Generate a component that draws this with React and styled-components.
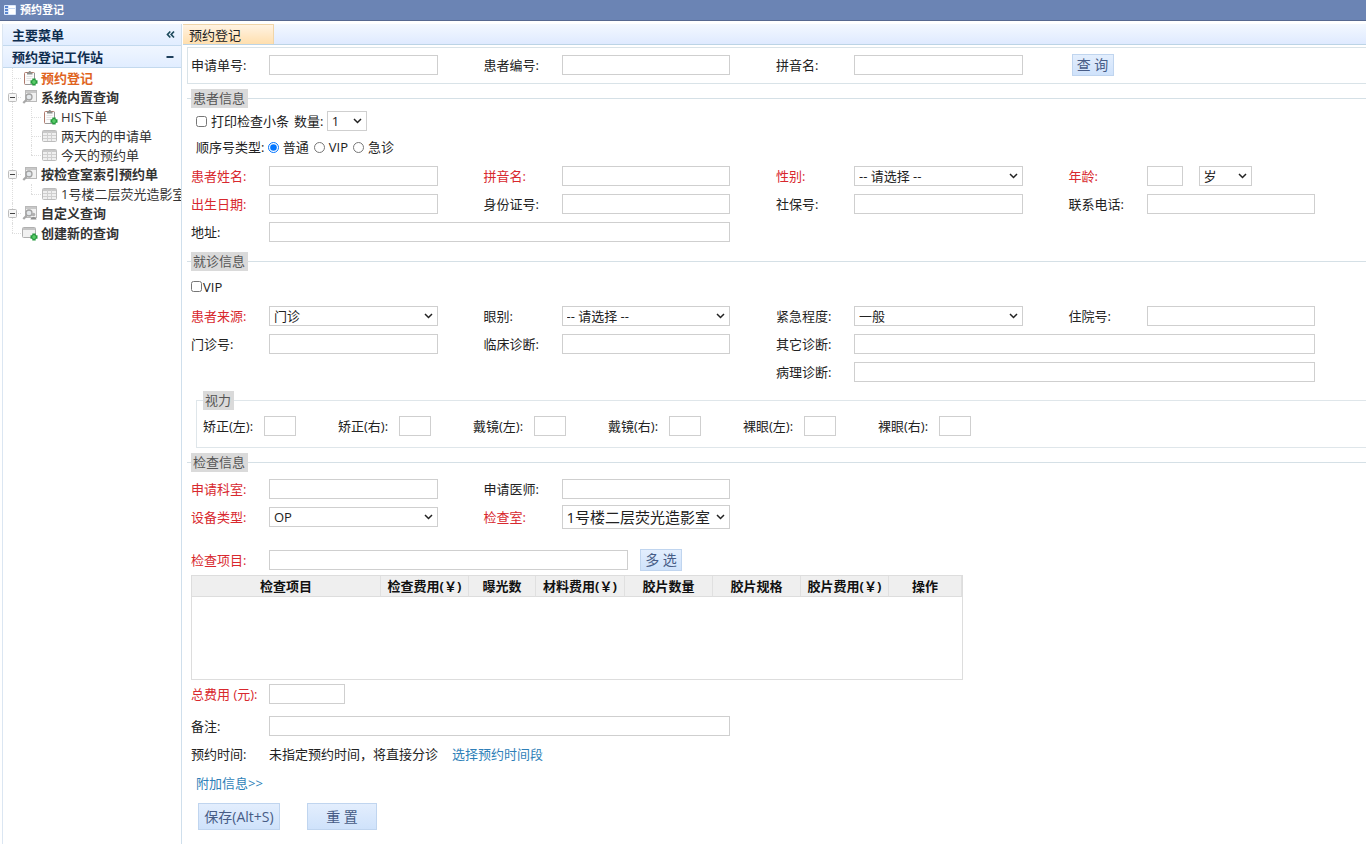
import React, { useState } from 'react';
import styled, { createGlobalStyle, css } from 'styled-components';

const GlobalStyle = createGlobalStyle`
    * {
        box-sizing: border-box;
    }
    body {
        margin: 0;
        background: #fff;
        color: #222;
        font: 13px/18px "Open Sans", "Noto Sans CJK SC", sans-serif;
    }
    input, select, button {
        font: inherit;
        color: inherit;
        margin: 0;
    }
`;

const Page = styled.div`
    display: flex;
    flex-direction: column;
    min-height: 100vh;
`;

const TitleBar = styled.header`
    display: flex;
    align-items: center;
    gap: 4px;
    height: 21px;
    padding-left: 4px;
    background: #6b84b4;
    border-bottom: 1px solid #56688f;
    color: #fff;
    font-size: 11px;
    font-weight: bold;
`;

const Body = styled.div`
    display: flex;
    flex: 1;
    gap: 1px;
    padding: 3px 0 0 2px;
`;

const Sidebar = styled.aside`
    flex: 0 0 180px;
    overflow: hidden;
    border-left: 1px solid #dbe6f2;
    border-right: 1px solid #cfdfec;
`;

const PanelHeader = styled.h2`
    display: flex;
    align-items: center;
    justify-content: space-between;
    height: 22px;
    margin: 0;
    padding: 0 6px 0 9px;
    background: linear-gradient(to bottom, #f0f6ff, #e1edff);
    border-bottom: 1px solid #c3d9ee;
    color: #0e2d4f;
    font-size: 13px;
`;

const HeaderButton = styled.button`
    display: flex;
    padding: 0;
    border: 0;
    background: none;
`;

const Tree = styled.ul`
    margin: 0;
    padding: 0;
    list-style: none;
`;

const TreeRow = styled.div`
    display: flex;
    align-items: center;
    height: ${props => (props.$group ? '20px' : '19px')};
    white-space: nowrap;
    color: #333;
    font-weight: ${props => (props.$bold ? 'bold' : 'normal')};
    ${props => props.$active && css`
        color: #e0641e;
    `}

    svg {
        flex-shrink: 0;
    }
`;

const Guide = styled.span`
    position: relative;
    flex: 0 0 ${props => (props.$first ? '19px' : '20px')};
    height: 100%;

    &::before {
        content: '';
        position: absolute;
        top: 0;
        left: 9px;
        height: ${props => (props.$last ? '50%' : '100%')};
        border-left: 1px dotted #ddd;
    }
    &::after {
        content: '';
        position: absolute;
        top: 50%;
        left: 9px;
        right: 1px;
        border-top: ${props => (props.$branch ? '1px dotted #ddd' : '0')};
    }
    svg {
        position: absolute;
        z-index: 1;
        top: 6px;
        left: 5px;
    }
`;

const TreeText = styled.span`
    margin-left: 3px;
`;

const Main = styled.main`
    flex: 1;
    min-width: 0;
`;

const TabBar = styled.div`
    display: flex;
    height: 21px;
    background: linear-gradient(to bottom, #f3f8ff, #dfeaff);
    border-bottom: 1px solid #bcd4e6;
    margin-bottom: 2px;
`;

const Tab = styled.button`
    width: 91px;
    padding: 0 6px;
    text-align: left;
    line-height: 20px;
    border: 1px solid #f0d5a8;
    border-width: 1px 1px 0 0;
    background: linear-gradient(to bottom, #fff3e3, #ffdfae);
`;

const Content = styled.div`
    padding-left: 4px;
`;

const QueryPanel = styled.form`
    height: 37px;
    padding: 3px 0 0 3px;
    border: 1px solid #d9e3e8;
    border-right: 0;
`;

const Section = styled.fieldset`
    min-width: 0;
    margin: 5px 0 0;
    padding: 0 0 0 4px;
    border: 0;
    border-top: 1px solid #d5e0e6;
`;

const Legend = styled.legend`
    height: 19px;
    padding: 0 3px 0 2px;
    background: #dadada;
    color: #555;
    line-height: 19px;
`;

const Vision = styled.fieldset`
    display: block;
    min-width: 0;
    margin: 5px 0 0 5px;
    padding: 0 0 5px 6px;
    border: 1px solid #dfe6ea;
    border-right: 0;
`;

const VisionRow = styled.div`
    display: flex;
    align-items: center;
    height: 32px;
`;

const VisionField = styled.div`
    display: flex;
    align-items: center;
    width: 135px;
`;

const VisionLabel = styled.label`
    width: 61px;
`;

const OptionRow = styled.div`
    display: flex;
    align-items: center;
    height: ${props => (props.$tall ? '31px' : '26px')};
    padding-left: ${props => (props.$tall ? '0' : '5px')};
`;

const OptionLabel = styled.label`
    margin: 0 5px 0 ${props => (props.$tight ? '1px' : '4px')};
`;

const Tick = styled.input`
    width: 11px;
    height: 11px;
`;

const FieldGrid = styled.div`
    display: grid;
    grid-template-columns: repeat(4, minmax(0, 1fr));
    grid-auto-rows: 28px;
    align-items: center;
    column-gap: 46px;
    padding: ${props => props.$top || '0'} 51px ${props => props.$bottom || '0'} 0;
`;

const FieldBox = styled.div`
    display: flex;
    align-items: center;
    grid-column: ${props => props.$start || 'auto'} / span ${props => props.$span || 1};
`;

const FieldRow = styled.div`
    display: flex;
    align-items: center;
    height: 28px;
    margin-top: ${props => props.$gap || '0'};
`;

const Label = styled.label`
    flex: 0 0 78px;
    color: ${props => (props.$required ? '#d8282e' : 'inherit')};
`;

const control = css`
    flex: ${props => (props.$width ? `0 0 ${props.$width}` : '1')};
    min-width: 0;
    border: 1px solid #cfcfcf;
    border-radius: 0;
    background: #fff;
`;

const TextInput = styled.input`
    ${control}
    width: ${props => props.$width || 'auto'};
    height: 20px;
    padding: 0 3px;
`;

const chevron = `url("data:image/svg+xml,%3Csvg xmlns='http://www.w3.org/2000/svg' width='9' height='6' fill='none' stroke='%23222' stroke-width='1.500'%3E%3Cpath d='M1 1l3.500 3.500L8 1'/%3E%3C/svg%3E")`;

const Select = styled.select`
    ${control}
    appearance: none;
    width: ${props => props.$width || 'auto'};
    height: ${props => (props.$large ? '24px' : '20px')};
    padding: 0 14px 0 4px;
    background: #fff ${chevron} no-repeat right 4px center;
    font-size: ${props => (props.$large ? '15px' : '13px')};
    line-height: 18px;
`;

const Pair = styled.div`
    display: flex;
    align-items: center;
    gap: ${props => props.$gap || '16px'};
`;

const QueryAction = styled.div`
    display: flex;
    padding-left: 3px;
`;

const Button = styled.button`
    width: ${props => props.$width || '42px'};
    height: ${props => (props.$large ? '27px' : '22px')};
    padding: 0;
    border: 1px solid #c0d5ef;
    background: linear-gradient(to bottom, #e3eefd, #cfe2fb);
    color: #475c86;
    font-size: 14px;
    line-height: 20px;
`;

const Link = styled.a`
    color: #2f7fb8;
    text-decoration: none;
`;

const LinkAfterText = styled(Link)`
    margin-left: 14px;
`;

const TableBox = styled.div`
    width: 772px;
    max-width: 100%;
    height: 105px;
    margin-top: 1px;
    border: 1px solid #ddd;
`;

const ItemTable = styled.table`
    width: 100%;
    table-layout: fixed;
    border-collapse: separate;
    border-spacing: 0;

    th {
        height: 21px;
        padding: 0;
        background: #efefef;
        border-right: 1px solid #e0e0e0;
        border-bottom: 1px solid #ddd;
        color: #111;
        font-size: 13px;
    }
`;

const HeadCell = styled.th`
    width: ${props => props.$width};
`;

const MoreRow = styled.div`
    display: flex;
    align-items: center;
    height: 28px;
    margin-top: 1px;
    padding-left: 5px;
`;

const Actions = styled.div`
    display: flex;
    gap: 27px;
    padding: 6px 0 8px 7px;
`;

const AppIcon = () => (
    <svg width="12" height="12" viewBox="0 0 12 12">
        <rect x="0" y="1" width="12" height="10" rx="1" fill="#dbe8fb" />
        <rect x="1" y="2" width="3" height="2" fill="#5b86d0" />
        <rect x="1" y="5" width="3" height="2" fill="#5b86d0" />
        <rect x="1" y="8" width="3" height="2" fill="#5b86d0" />
        <rect x="5" y="2" width="6" height="8" fill="#fff" />
        <path d="M5 4.5h6" stroke="#c6d8f4" />
    </svg>
);

const CollapseIcon = () => (
    <svg width="9" height="9" viewBox="0 0 9 9" fill="none" stroke="#1d4a5c" strokeWidth="1.7">
        <path d="M4.300 1.500 1.500 4.500l2.800 3M8 1.500l-2.800 3 2.800 3" />
    </svg>
);

const MinusIcon = () => (
    <svg width="10" height="10" viewBox="0 0 10 10">
        <path d="M1.500 5h7" stroke="#1d3f5c" strokeWidth="2" />
    </svg>
);

const ToggleIcon = () => (
    <svg width="9" height="9" viewBox="0 0 9 9">
        <rect x=".5" y=".5" width="8" height="8" rx="1" fill="#f6f6f6" stroke="#bdbdbd" />
        <path d="M2 4.500h5" stroke="#444" />
    </svg>
);

const PlusBadge = () => (
    <>
        <path d="M12 8.500v7M8.500 12h7" stroke="#249a3c" strokeWidth="3.400" />
        <path d="M12 10v4M10 12h4" stroke="#66d873" strokeWidth="1.200" />
    </>
);

const ClipboardIcon = () => (
    <svg width="16" height="16" viewBox="0 0 16 16">
        <rect x="2.500" y="2.500" width="10" height="12" rx="1" fill="#fbfbfb" stroke="#b07a6c" />
        <path d="M12.500 3v11.500h-9" fill="none" stroke="#979797" />
        <path d="M5 4.500V2.500h1.500L7 1h1.500L9 2.500h1.500v2z" fill="#8b8f8c" />
        <path d="M4.500 6.500h6M4.500 8.500h5M4.500 10.500h4" stroke="#e2e2e2" />
        <PlusBadge />
    </svg>
);

const SearchTableIcon = ({ children }) => (
    <svg width="16" height="16" viewBox="0 0 16 16" fill="none">
        <rect x="3.500" y="1.500" width="11" height="11" fill="#f1f1f1" stroke="#b9b9b9" />
        <path d="M4 3h10" stroke="#c8c8c8" strokeWidth="2" />
        <circle cx="7" cy="8" r="3" fill="#e3e7ea" stroke="#a2a2a2" strokeWidth="1.300" />
        <path d="M5 10.300 1.300 14" stroke="#a8a8a8" strokeWidth="2.200" />
        {children}
    </svg>
);

const UserSearchIcon = () => (
    <SearchTableIcon>
        <circle cx="11.500" cy="9.500" r="1.800" fill="#b0b0b0" />
        <path d="M8.500 14.500c0-3.500 6-3.500 6 0z" fill="#909090" />
    </SearchTableIcon>
);

const GridIcon = () => (
    <svg width="16" height="16" viewBox="0 0 16 16" fill="none">
        <rect x=".5" y="2.500" width="14" height="11" rx="1" fill="#efefef" stroke="#bcbcbc" />
        <path d="M1 4h13" stroke="#c8c8c8" strokeWidth="2" />
        <path d="M1 7.500h13M1 10.500h13M5.500 4v9M9.500 4v9" stroke="#cfcfcf" />
    </svg>
);

const NewQueryIcon = () => (
    <svg width="16" height="16" viewBox="0 0 16 16" fill="none">
        <rect x=".5" y="2.500" width="13" height="10" rx="1" fill="#f1f1f1" stroke="#b0b0b0" />
        <path d="M1 4h12" stroke="#c4c4c4" strokeWidth="2" />
        <PlusBadge />
    </svg>
);

const treeRows = [
    { text: '预约登记', Icon: ClipboardIcon, bold: true, active: true },
    { text: '系统内置查询', Icon: SearchTableIcon, bold: true, group: true },
    { text: 'HIS下单', Icon: ClipboardIcon, child: true },
    { text: '两天内的申请单', Icon: GridIcon, child: true },
    { text: '今天的预约单', Icon: GridIcon, child: true, last: true },
    { text: '按检查室索引预约单', Icon: SearchTableIcon, bold: true, group: true },
    { text: '1号楼二层荧光造影室', Icon: GridIcon, child: true, last: true },
    { text: '自定义查询', Icon: UserSearchIcon, bold: true, group: true },
    { text: '创建新的查询', Icon: NewQueryIcon, bold: true, last: true },
];

const visionFields = ['矫正(左):', '矫正(右):', '戴镜(左):', '戴镜(右):', '裸眼(左):', '裸眼(右):'];

const itemColumns = [
    ['检查项目', '189px'],
    ['检查费用(￥)', '88px'],
    ['曝光数', '67px'],
    ['材料费用(￥)', '89px'],
    ['胶片数量', '88px'],
    ['胶片规格', '88px'],
    ['胶片费用(￥)', '88px'],
    ['操作', 'auto'],
];

const Field = ({ id, label, required, start, span, options, large }) => (
    <FieldBox $start={start} $span={span}>
        <Label htmlFor={id} $required={required}>{label}</Label>
        {options
            ? <Select id={id} $large={large}>
                {options.map(option => <option key={option}>{option}</option>)}
            </Select>
            : <TextInput id={id} type="text" />}
    </FieldBox>
);

const SideMenu = () => (
    <Sidebar>
        <PanelHeader>
            主要菜单
            <HeaderButton type="button"><CollapseIcon /></HeaderButton>
        </PanelHeader>
        <PanelHeader>
            预约登记工作站
            <HeaderButton type="button"><MinusIcon /></HeaderButton>
        </PanelHeader>
        <Tree>
            {treeRows.map(({ text, Icon, bold, active, group, child, last }) => (
                <li key={text}>
                    <TreeRow $bold={bold} $active={active} $group={group}>
                        <Guide $first $branch={!child} $last={last && !child}>
                            {group && <ToggleIcon />}
                        </Guide>
                        {child && <Guide $branch $last={last} />}
                        <Icon />
                        <TreeText>{text}</TreeText>
                    </TreeRow>
                </li>
            ))}
        </Tree>
    </Sidebar>
);

const App = () => {
    const [orderType, setOrderType] = useState('普通');

    return (
        <Page>
            <GlobalStyle />
            <TitleBar><AppIcon />预约登记</TitleBar>
            <Body>
                <SideMenu />
                <Main>
                    <TabBar><Tab type="button">预约登记</Tab></TabBar>
                    <Content>
                        <QueryPanel onSubmit={e => e.preventDefault()}>
                            <FieldGrid>
                                <Field id="q-order" label="申请单号:" />
                                <Field id="q-patient" label="患者编号:" />
                                <Field id="q-pinyin" label="拼音名:" />
                                <QueryAction><Button type="submit">查 询</Button></QueryAction>
                            </FieldGrid>
                        </QueryPanel>

                        <Section>
                            <Legend>患者信息</Legend>
                            <OptionRow>
                                <Tick type="checkbox" id="print" />
                                <OptionLabel htmlFor="print">打印检查小条</OptionLabel>
                                <label htmlFor="count">数量:&nbsp;</label>
                                <Select id="count" $width="40px"><option>1</option></Select>
                            </OptionRow>
                            <OptionRow>
                                <span>顺序号类型:&nbsp;</span>
                                {['普通', 'VIP', '急诊'].map(type => (
                                    <React.Fragment key={type}>
                                        <Tick
                                            type="radio"
                                            name="orderType"
                                            id={`type-${type}`}
                                            checked={orderType === type}
                                            onChange={() => setOrderType(type)}
                                        />
                                        <OptionLabel htmlFor={`type-${type}`}>{type}</OptionLabel>
                                    </React.Fragment>
                                ))}
                            </OptionRow>
                            <FieldGrid $top="2px" $bottom="1px">
                                <Field id="name" label="患者姓名:" required />
                                <Field id="pinyin" label="拼音名:" required />
                                <Field id="sex" label="性别:" required options={['-- 请选择 --']} />
                                <FieldBox>
                                    <Label htmlFor="age" $required>年龄:</Label>
                                    <Pair>
                                        <TextInput id="age" type="text" $width="36px" />
                                        <Select aria-label="年龄单位" $width="53px"><option>岁</option></Select>
                                    </Pair>
                                </FieldBox>
                                <Field id="birthday" label="出生日期:" required />
                                <Field id="idcard" label="身份证号:" />
                                <Field id="social" label="社保号:" />
                                <Field id="phone" label="联系电话:" />
                                <Field id="address" label="地址:" span={2} />
                            </FieldGrid>
                        </Section>

                        <Section>
                            <Legend>就诊信息</Legend>
                            <OptionRow $tall>
                                <Tick type="checkbox" id="vip" />
                                <OptionLabel htmlFor="vip" $tight>VIP</OptionLabel>
                            </OptionRow>
                            <FieldGrid>
                                <Field id="source" label="患者来源:" required options={['门诊']} />
                                <Field id="eye" label="眼别:" options={['-- 请选择 --']} />
                                <Field id="urgency" label="紧急程度:" options={['一般']} />
                                <Field id="inpatient" label="住院号:" />
                                <Field id="outpatient" label="门诊号:" />
                                <Field id="clinical" label="临床诊断:" />
                                <Field id="other" label="其它诊断:" start={3} span={2} />
                                <Field id="pathology" label="病理诊断:" start={3} span={2} />
                            </FieldGrid>
                            <Vision>
                                <Legend>视力</Legend>
                                <VisionRow>
                                    {visionFields.map((label, i) => (
                                        <VisionField key={label}>
                                            <VisionLabel htmlFor={`vision-${i}`}>{label}</VisionLabel>
                                            <TextInput id={`vision-${i}`} type="text" $width="32px" />
                                        </VisionField>
                                    ))}
                                </VisionRow>
                            </Vision>
                        </Section>

                        <Section>
                            <Legend>检查信息</Legend>
                            <FieldGrid $top="3px">
                                <Field id="dept" label="申请科室:" required />
                                <Field id="doctor" label="申请医师:" />
                                <Field id="device" label="设备类型:" required start={1} options={['OP']} />
                                <Field id="room" label="检查室:" required large options={['1号楼二层荧光造影室']} />
                            </FieldGrid>
                            <FieldRow $gap="15px">
                                <Label htmlFor="item" $required>检查项目:</Label>
                                <Pair $gap="12px">
                                    <TextInput id="item" type="text" $width="359px" />
                                    <Button type="button">多 选</Button>
                                </Pair>
                            </FieldRow>
                            <TableBox>
                                <ItemTable>
                                    <thead>
                                        <tr>
                                            {itemColumns.map(([name, width]) => (
                                                <HeadCell key={name} $width={width}>{name}</HeadCell>
                                            ))}
                                        </tr>
                                    </thead>
                                </ItemTable>
                            </TableBox>
                            <FieldRow>
                                <Label htmlFor="total" $required>总费用 (元):</Label>
                                <TextInput id="total" type="text" $width="76px" />
                            </FieldRow>
                            <FieldGrid $top="4px">
                                <Field id="remark" label="备注:" span={2} />
                            </FieldGrid>
                            <FieldRow>
                                <Label as="span">预约时间:</Label>
                                <span>未指定预约时间，将直接分诊</span>
                                <LinkAfterText href="#time">选择预约时间段</LinkAfterText>
                            </FieldRow>
                            <MoreRow><Link href="#more">附加信息&gt;&gt;</Link></MoreRow>
                            <Actions>
                                <Button type="button" $large $width="82px">保存(Alt+S)</Button>
                                <Button type="button" $large $width="70px">重 置</Button>
                            </Actions>
                        </Section>
                    </Content>
                </Main>
            </Body>
        </Page>
    );
};

export default App;
